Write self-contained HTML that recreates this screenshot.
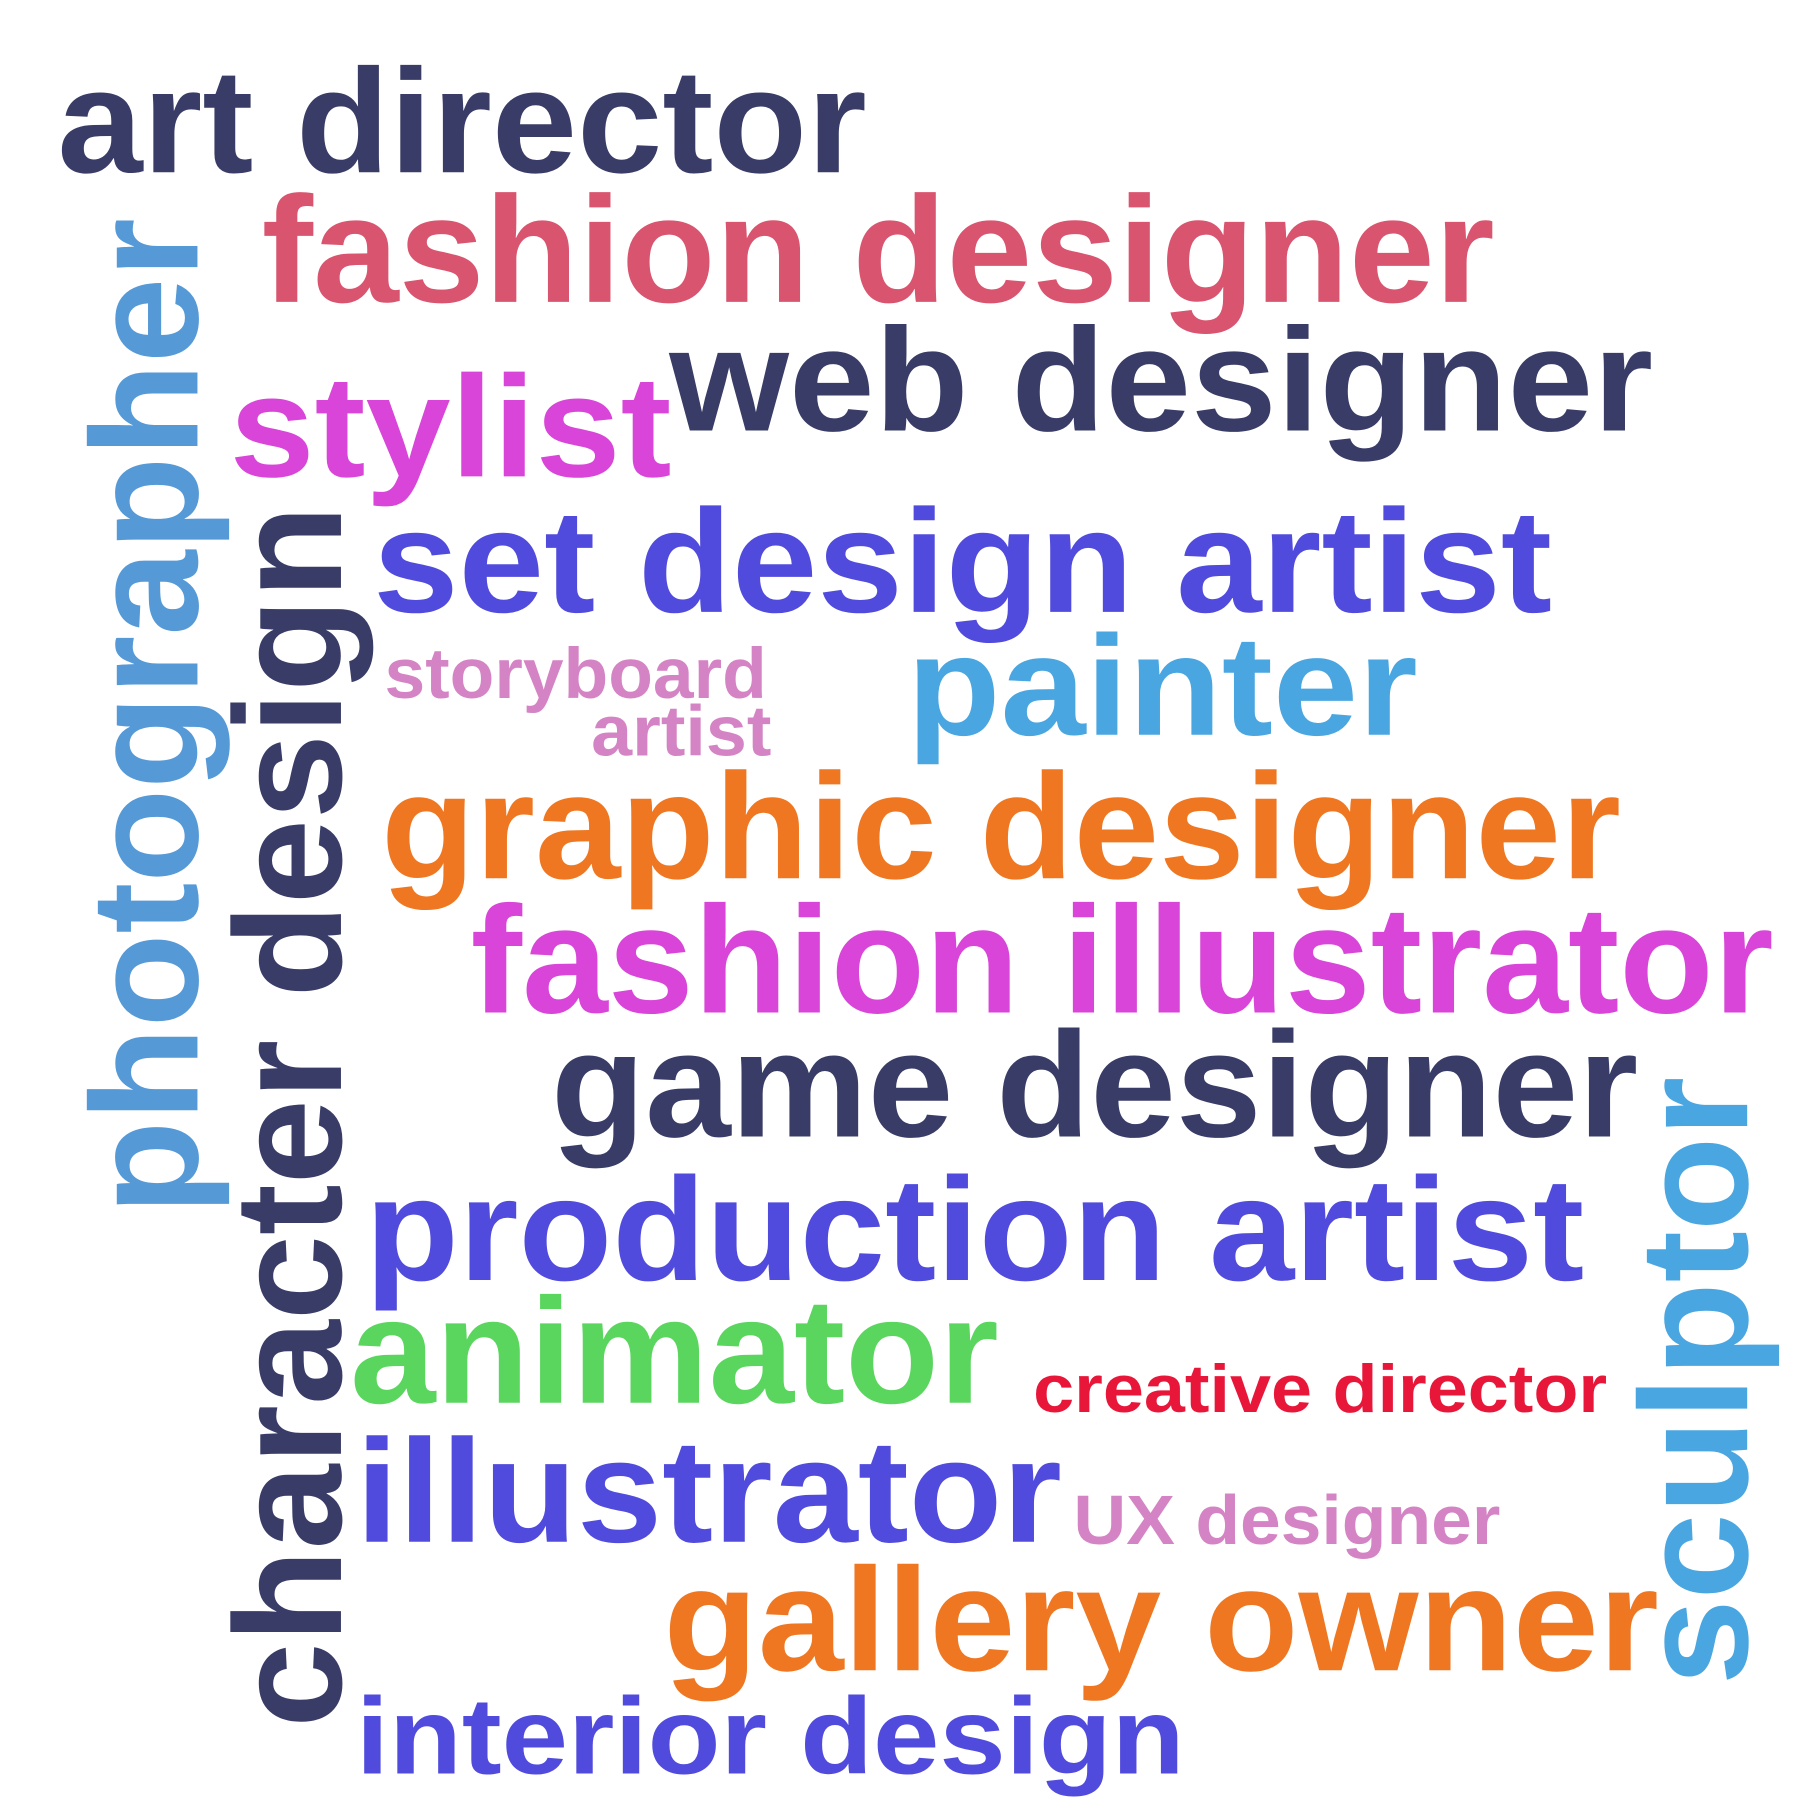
<!DOCTYPE html>
<html><head><meta charset="utf-8"><style>
html,body{margin:0;padding:0;background:#fff;}
svg{display:block;}
text{font-family:"Liberation Sans",Arial,sans-serif;font-weight:bold;}
</style></head><body>
<svg width="1800" height="1800" viewBox="0 0 1568 1568" xmlns="http://www.w3.org/2000/svg">
<rect width="1568" height="1568" fill="#fff"/>
<g>
<text x="50" y="150" font-size="129" fill="#383c66" textLength="705" lengthAdjust="spacingAndGlyphs">art director</text>
<text x="228" y="263" font-size="132" fill="#d9546e" textLength="1074" lengthAdjust="spacingAndGlyphs">fashion designer</text>
<text x="583" y="375" font-size="128" fill="#383c66" textLength="857" lengthAdjust="spacingAndGlyphs">web designer</text>
<text x="200" y="415" font-size="126" fill="#d845d8" textLength="385" lengthAdjust="spacingAndGlyphs">stylist</text>
<text x="325" y="533" font-size="128" fill="#504bdc" textLength="1027" lengthAdjust="spacingAndGlyphs">set design artist</text>
<text x="335" y="608" font-size="62" fill="#d484c4" textLength="333" lengthAdjust="spacingAndGlyphs">storyboard</text>
<text x="515" y="658" font-size="62" fill="#d484c4" textLength="157" lengthAdjust="spacingAndGlyphs">artist</text>
<text x="790" y="640" font-size="124" fill="#4aa6e0" textLength="445" lengthAdjust="spacingAndGlyphs">painter</text>
<text x="332" y="765" font-size="131" fill="#ef7722" textLength="1080" lengthAdjust="spacingAndGlyphs">graphic designer</text>
<text x="410" y="882" font-size="133" fill="#d845d8" textLength="1135" lengthAdjust="spacingAndGlyphs">fashion illustrator</text>
<text x="480" y="990" font-size="131" fill="#383c66" textLength="947" lengthAdjust="spacingAndGlyphs">game designer</text>
<text x="318" y="1115" font-size="128" fill="#504bdc" textLength="1062" lengthAdjust="spacingAndGlyphs">production artist</text>
<text x="305" y="1222" font-size="131" fill="#5ad65e" textLength="565" lengthAdjust="spacingAndGlyphs">animator</text>
<text x="900" y="1230" font-size="59" fill="#e8173a" textLength="500" lengthAdjust="spacingAndGlyphs">creative director</text>
<text x="310" y="1343" font-size="128" fill="#504bdc" textLength="615" lengthAdjust="spacingAndGlyphs">illustrator</text>
<text x="935" y="1345" font-size="61" fill="#d484c4" textLength="372" lengthAdjust="spacingAndGlyphs">UX designer</text>
<text x="578" y="1455" font-size="128" fill="#ef7722" textLength="867" lengthAdjust="spacingAndGlyphs">gallery owner</text>
<text x="310" y="1545" font-size="95" fill="#504bdc" textLength="722" lengthAdjust="spacingAndGlyphs">interior design</text>
<text transform="translate(172,1058) rotate(-90)" x="0" y="0" font-size="133" fill="#5599d6" textLength="868" lengthAdjust="spacingAndGlyphs">photographer</text>
<text transform="translate(297,1505) rotate(-90)" x="0" y="0" font-size="133" fill="#383c66" textLength="1065" lengthAdjust="spacingAndGlyphs">character design</text>
<text transform="translate(1522,1468) rotate(-90)" x="0" y="0" font-size="134" fill="#4aa6e0" textLength="530" lengthAdjust="spacingAndGlyphs">sculptor</text>
</g>
</svg>
</body></html>
